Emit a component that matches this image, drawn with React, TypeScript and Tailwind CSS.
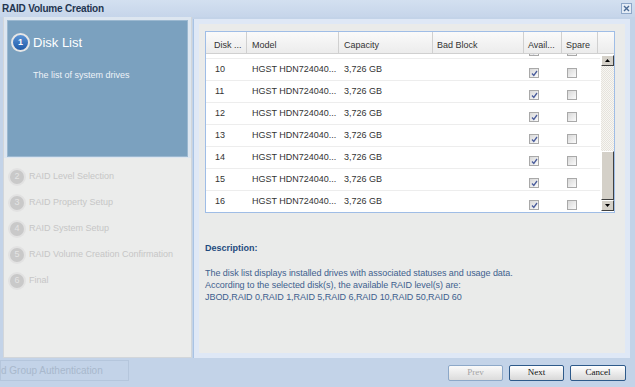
import React from 'react';

const rows = ['10', '11', '12', '13', '14', '15', '16'];

const steps = [
  { n: '2', label: 'RAID Level Selection' },
  { n: '3', label: 'RAID Property Setup' },
  { n: '4', label: 'RAID System Setup' },
  { n: '5', label: 'RAID Volume Creation Confirmation' },
  { n: '6', label: 'Final' },
];

function CheckBox({ checked = false }: { checked?: boolean }) {
  return (
    <span className="flex h-[10px] w-[10px] items-center justify-center border border-[#a9a9a9] bg-gradient-to-br from-[#d8d8d8] to-[#fbfbfb]">
      {checked && (
        <svg width="7" height="7" viewBox="0 0 7 7">
          <path d="M1 3.5 L2.8 5.5 L6 1" fill="none" stroke="#4b5d9c" strokeWidth="1.3" />
        </svg>
      )}
    </span>
  );
}

function DiskRow({ id, partial = false }: { id: string; partial?: boolean }) {
  return (
    <div className={`flex h-[22px] shrink-0 border-b border-[#ededed] text-[9px] text-[#333] ${partial ? 'mt-[-17px]' : ''}`}>
      <div className="w-[41px] pl-[9px] pt-[4px]">{partial ? '' : id}</div>
      <div className="w-[92px] pl-[5px] pt-[4px]">{partial ? '' : 'HGST HDN724040...'}</div>
      <div className="w-[94px] pl-[5px] pt-[4px]">{partial ? '' : '3,726 GB'}</div>
      <div className="w-[91px]" />
      <div className="w-[38px] pl-[5px] pt-[9px]">
        <CheckBox checked />
      </div>
      <div className="w-[36px] pl-[5px] pt-[9px]">
        <CheckBox />
      </div>
    </div>
  );
}

function ScrollArrow({ up }: { up?: boolean }) {
  return (
    <div className="flex h-[11px] w-[13px] shrink-0 items-center justify-center border border-t-white border-l-white border-r-[#404040] border-b-[#404040] bg-[#d4d0c8]">
      <svg width="5" height="3" viewBox="0 0 5 3">
        <path d={up ? 'M0 3 L2.5 0 L5 3 Z' : 'M0 0 L2.5 3 L5 0 Z'} fill="#000" />
      </svg>
    </div>
  );
}

export default function App() {
  return (
    <div
      className="relative flex h-[387px] w-[635px] flex-col overflow-hidden bg-[#c3d3e8]"
      style={{ fontFamily: '"Liberation Sans", Arial, sans-serif' }}
    >
      {/* title bar */}
      <div className="flex h-[17px] shrink-0 items-center justify-between bg-gradient-to-b from-[#d3e0f0] to-[#c6d5ea] pl-[2px] pr-[3px]">
        <span className="text-[10px] font-bold tracking-[-0.2px] text-[#1f3550]">RAID Volume Creation</span>
        <span className="flex h-[11px] w-[11px] items-center justify-center border border-[#8ea7c8] bg-[#e4ecf6]">
          <svg width="7" height="7" viewBox="0 0 7 7">
            <path d="M1 1 L6 6 M6 1 L1 6" stroke="#4a6a94" strokeWidth="1.4" />
          </svg>
        </span>
      </div>

      <div className="flex h-[341px] shrink-0 pl-[3px]">
        {/* left steps panel */}
        <div className="flex w-[189px] flex-col border-x border-b border-[#d2d6da] bg-[#ebeceb]">
          <div className="bg-[#dde6f0] px-[3px] pt-[3px] pb-[1px]">
            <div className="h-[137px] border border-[#9bb8d0] bg-[#7ba1bf] pl-[3px] pt-[12px]">
              <div className="flex items-center gap-[3px]">
                <span className="flex h-[19px] w-[19px] items-center justify-center rounded-full border-2 border-[#e6e6e6] bg-gradient-to-b from-[#5b94d6] to-[#1f5aa8] text-[9px] font-bold text-white">
                  1
                </span>
                <span className="text-[13px] text-white">Disk List</span>
              </div>
              <div className="mt-[16px] pl-[22px] text-[9px] text-[#eef3f8]">The list of system drives</div>
            </div>
          </div>
          <div className="flex flex-col gap-[8px] pl-[4px] pt-[10px]">
            {steps.map(s => (
              <div key={s.n} className="flex items-center gap-[3px]">
                <span className="flex h-[18px] w-[18px] items-center justify-center rounded-full border-2 border-[#e2e2e2] bg-[#c9c9c9] text-[9px] text-[#e4e4e4]">
                  {s.n}
                </span>
                <span className="text-[9px] text-[#c6c6c6]">{s.label}</span>
              </div>
            ))}
          </div>
        </div>

        {/* right content panel */}
        <div className="ml-[1px] mt-[2px] flex w-[437px] flex-col border-l border-[#a9c3e4] bg-[#dfe8f6] p-[5px]">
          <div className="flex flex-1 flex-col bg-[#eaebea] px-[6px] pt-[7px]">
            <div className="flex h-[182px] w-[410px] flex-col border border-[#9fbde6] bg-white">
              {/* header */}
              <div className="flex h-[22px] shrink-0 border-b border-[#d0d0d0] bg-gradient-to-b from-[#fafafa] to-[#ececec] text-[9px] text-[#333]">
                <div className="w-[41px] border-r border-[#d0d0d0] pl-[8px] pt-[7px]">Disk ...</div>
                <div className="w-[92px] border-r border-[#d0d0d0] pl-[5px] pt-[7px]">Model</div>
                <div className="w-[94px] border-r border-[#d0d0d0] pl-[5px] pt-[7px]">Capacity</div>
                <div className="w-[91px] border-r border-[#d0d0d0] pl-[4px] pt-[7px]">Bad Block</div>
                <div className="w-[38px] border-r border-[#d0d0d0] pl-[4px] pt-[7px]">Avail...</div>
                <div className="w-[36px] border-r border-[#d0d0d0] pl-[4px] pt-[7px]">Spare</div>
                <div className="flex-1" />
              </div>
              {/* body */}
              <div className="flex flex-1 overflow-hidden">
                <div className="flex w-[394px] flex-col overflow-hidden">
                  <DiskRow id="9" partial />
                  {rows.map(r => (
                    <DiskRow key={r} id={r} />
                  ))}
                </div>
                <div className="my-[1px] ml-[1px] flex w-[13px] flex-col">
                  <ScrollArrow up />
                  <div className="flex-1 bg-[repeating-conic-gradient(#e6e3dc_0_25%,#f7f6f3_0_50%)] bg-[length:2px_2px]" />
                  <div className="h-[49px] shrink-0 border border-t-white border-l-white border-r-[#404040] border-b-[#404040] bg-[#d4d0c8]" />
                  <ScrollArrow />
                </div>
              </div>
            </div>

            <div className="mt-[29px] text-[9px] font-bold text-[#1f4a7e]">Description:</div>
            <div className="mt-[11px] text-[9px] leading-[12px] tracking-[-0.05px] text-[#3e5f8e]">
              <div>The disk list displays installed drives with associated statuses and usage data.</div>
              <div>According to the selected disk(s), the available RAID level(s) are:</div>
              <div>JBOD,RAID 0,RAID 1,RAID 5,RAID 6,RAID 10,RAID 50,RAID 60</div>
            </div>
          </div>
        </div>
      </div>

      {/* bottom bar */}
      <div className="flex flex-1 items-start pt-[2px]">
        <div className="flex h-[21px] w-[129px] items-center border border-[#b5c6dc] text-[10px] text-[#a8b8cc]">
          d Group Authentication
        </div>
        <div
          className="ml-auto mr-[9px] mt-[5px] flex gap-[6px] text-[9px]"
          style={{ fontFamily: '"Liberation Serif", "Times New Roman", serif' }}
        >
          <button className="h-[16px] w-[55px] rounded-[2px] border border-[#8da8c8] bg-gradient-to-b from-[#fafafa] to-[#dcdcdc] text-[#a4a4a4]">
            Prev
          </button>
          <button className="h-[16px] w-[55px] rounded-[2px] border border-[#2e5a8a] bg-gradient-to-b from-[#ffffff] to-[#d8d8d8] text-[#111]">
            Next
          </button>
          <button className="h-[16px] w-[56px] rounded-[2px] border border-[#2e5a8a] bg-gradient-to-b from-[#ffffff] to-[#d8d8d8] text-[#111]">
            Cancel
          </button>
        </div>
      </div>
    </div>
  );
}
